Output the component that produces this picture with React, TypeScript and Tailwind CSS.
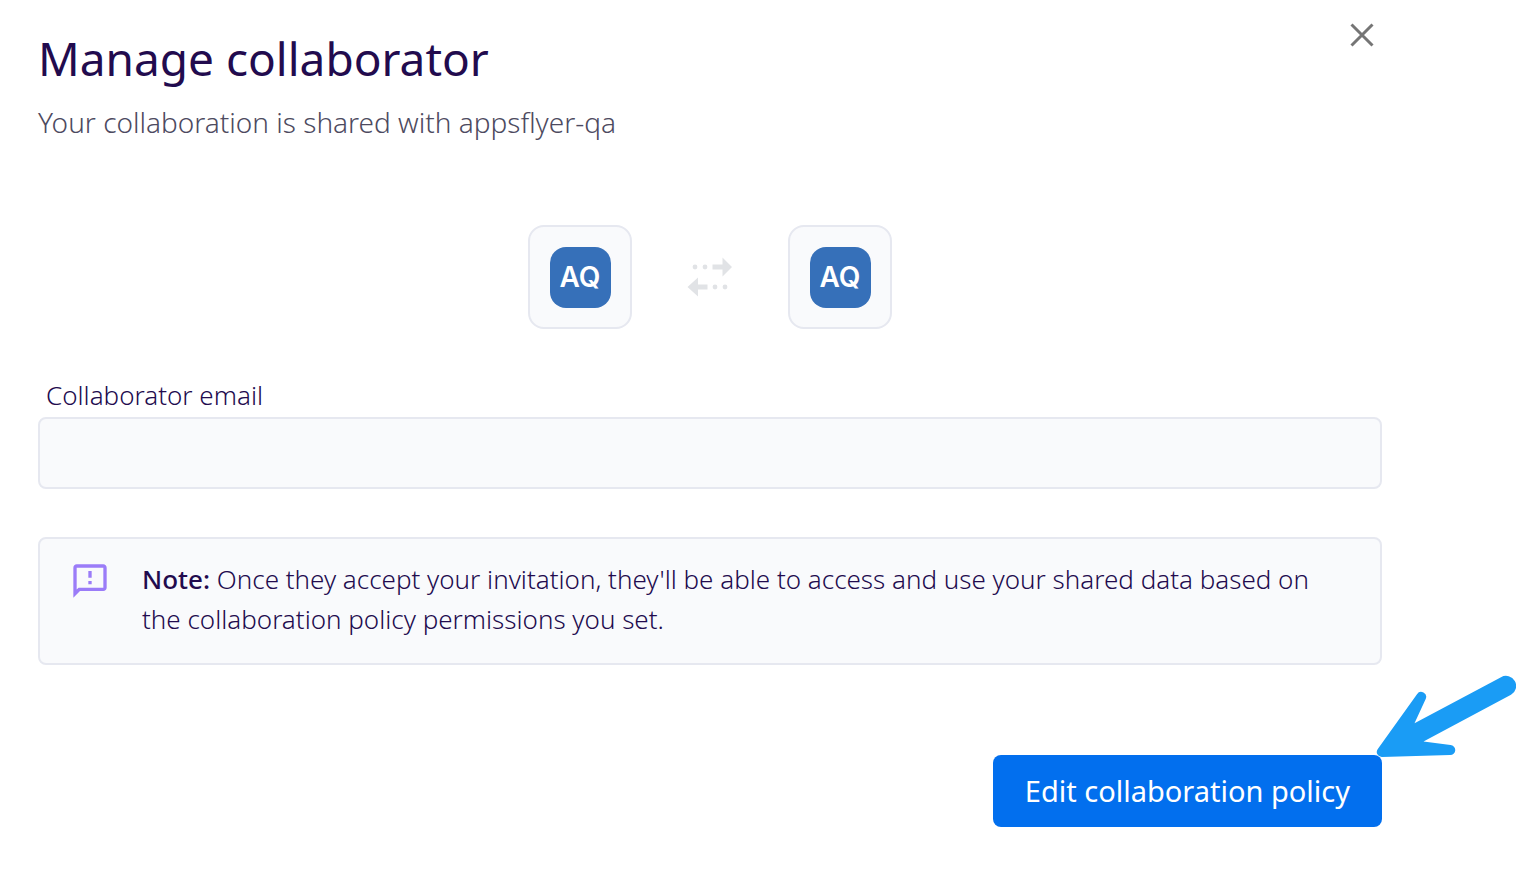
const Avatar = ({ initials }: { initials: string }) => (
  <div className="flex h-[104px] w-[104px] items-center justify-center rounded-2xl border-2 border-[#e6e8f0] bg-[#f9fafc]">
    <div className="flex h-[61px] w-[61px] items-center justify-center rounded-2xl bg-[#3670b9] font-['Inter',sans-serif] text-[28px] font-semibold text-white">
      {initials}
    </div>
  </div>
);

const CloseIcon = () => (
  <svg width="24" height="24" viewBox="0 0 24 24" fill="none" stroke="#757575" strokeWidth="3">
    <path d="M1.5 1.5l21 21M22.5 1.5l-21 21" />
  </svg>
);

const ExchangeIcon = () => (
  <svg width="46" height="40" viewBox="0 0 46 40" fill="#e1e3e6">
    <circle cx="8" cy="10" r="2.4" />
    <circle cx="18" cy="10" r="2.4" />
    <path d="M25.5 7.5H35.5V0.5L45 10L35.5 19.5V12.5H25.5Z" />
    <path d="M20.5 27.5H11V20.5L0.5 30L11 39.5V32.5H20.5Z" />
    <circle cx="28" cy="30" r="2.4" />
    <circle cx="38" cy="30" r="2.4" />
  </svg>
);

const FeedbackIcon = () => (
  <svg width="40" height="40" viewBox="0 0 24 24" fill="#9b7cf8">
    <path d="M20 2H4c-1.1 0-1.99.9-1.99 2L2 22l4-4h14c1.1 0 2-.9 2-2V4c0-1.1-.9-2-2-2zm0 14H5.170L4 17.170V4h16v12zM11 12h2v2h-2zm0-6h2v4h-2z" />
  </svg>
);

const PointerArrow = () => (
  <svg
    className="pointer-events-none absolute -top-20 -right-[134px]"
    width="140"
    height="84"
    viewBox="0 0 140 84"
    fill="#1a9cf5"
    aria-hidden="true"
  >
    <path d="M1.8 74L41 19.2A5 5 0 0 1 49.8 23.8L38.5 48.3L125 2.2A10 10 0 0 1 135 19.8L47.5 66.5L74.5 70A5 5 0 0 1 74 80L6 82A5 5 0 0 1 1.8 74Z" />
  </svg>
);

export default function App() {
  return (
    <main className="bg-white pt-[22px] pr-[134px] pb-11 pl-[38px] font-['Noto_Sans',sans-serif] text-[#220b4e]">
      <header className="flex items-start justify-between">
        <div>
          <h1 className="text-[46px] leading-[72px]">Manage collaborator</h1>
          <p className="mt-2 text-[28px] leading-10 font-light text-[#4d4a60]">
            Your collaboration is shared with appsflyer-qa
          </p>
        </div>
        <button type="button" aria-label="Close" className="p-2 pt-px">
          <CloseIcon />
        </button>
      </header>

      <div className="mt-[83px] flex items-center justify-center gap-[55px]">
        <Avatar initials="AQ" />
        <ExchangeIcon />
        <Avatar initials="AQ" />
      </div>

      <div className="mt-12">
        <label htmlFor="email" className="mb-1 block px-2 text-[26px] leading-9 font-light">
          Collaborator email
        </label>
        <input
          id="email"
          type="email"
          className="block h-[72px] w-full rounded-lg border-2 border-[#e6e8f0] bg-[#f9fafc] px-6 text-[26px] outline-none"
        />
      </div>

      <section className="mt-12 flex gap-8 rounded-lg border-2 border-[#e6e8f0] bg-[#f9fafc] pt-5 pr-12 pb-6 pl-[30px]">
        <div className="shrink-0 pt-0.5">
          <FeedbackIcon />
        </div>
        <p className="text-[26px] leading-10 font-light">
          <strong className="font-medium">Note:</strong> Once they accept your invitation, they'll be able to access and use your shared data based on the collaboration policy permissions you set.
        </p>
      </section>

      <footer className="mt-[90px] flex justify-end">
        <div className="relative">
          <button type="button" className="h-[72px] rounded-lg bg-[#026fee] px-8 text-[29px] text-white">
            Edit collaboration policy
          </button>
          <PointerArrow />
        </div>
      </footer>
    </main>
  );
}
